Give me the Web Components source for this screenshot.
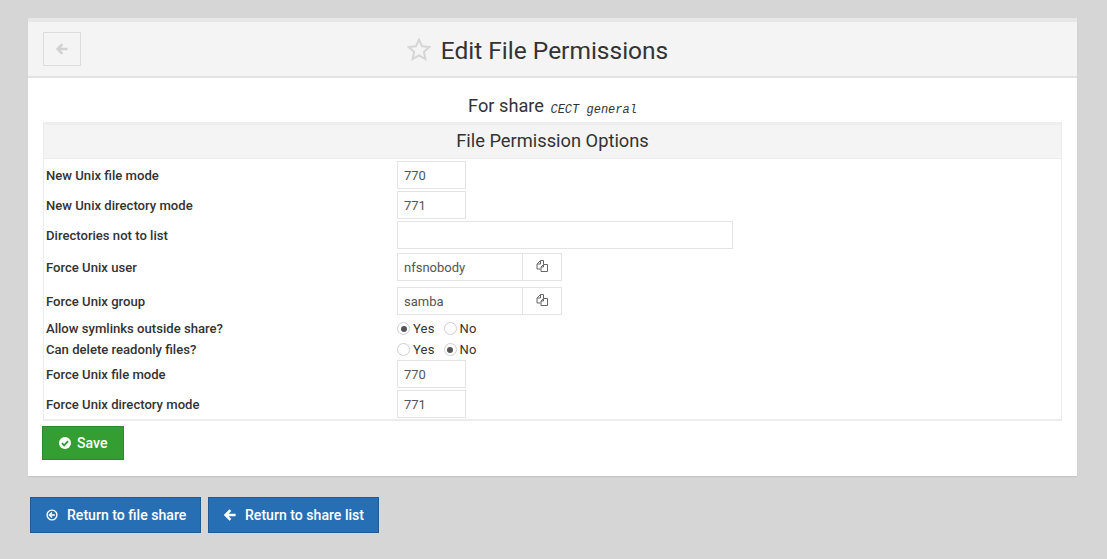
<!DOCTYPE html>
<html>
<head>
<meta charset="utf-8">
<title>Edit File Permissions</title>
<style>
  html, body { margin: 0; height: 100%; }
  body {
    background: #d6d6d6;
    font-family: Roboto, sans-serif;
    color: #333;
    overflow: hidden;
  }
</style>
</head>
<body>
<perm-page>
  <perm-panel heading="Edit File Permissions">
    <perm-subtitle share="CECT general"></perm-subtitle>
    <perm-table heading="File Permission Options">
      <perm-row label="New Unix file mode" pad="1"><perm-input value="770" width="69"></perm-input></perm-row>
      <perm-row label="New Unix directory mode" pad="1"><perm-input value="771" width="69"></perm-input></perm-row>
      <perm-row label="Directories not to list" pad="1"><perm-input value="" width="336"></perm-input></perm-row>
      <perm-row label="Force Unix user" pad="3"><perm-input value="nfsnobody" width="126" addon></perm-input></perm-row>
      <perm-row label="Force Unix group" pad="3"><perm-input value="samba" width="126" addon></perm-input></perm-row>
      <perm-row label="Allow symlinks outside share?"><perm-radios selected="Yes"></perm-radios></perm-row>
      <perm-row label="Can delete readonly files?"><perm-radios selected="No"></perm-radios></perm-row>
      <perm-row label="Force Unix file mode" pad="0 0 1px"><perm-input value="770" width="69"></perm-input></perm-row>
      <perm-row label="Force Unix directory mode" pad="1"><perm-input value="771" width="69"></perm-input></perm-row>
    </perm-table>
    <perm-button tone="green" icon="check" label="Save" class="save"></perm-button>
  </perm-panel>
  <perm-actions>
    <perm-button tone="blue" icon="circle-left" label="Return to file share"></perm-button>
    <perm-button tone="blue" icon="arrow-left" label="Return to share list"></perm-button>
  </perm-actions>
</perm-page>

<script>
const ICONS = {
  'arrow-left': '<svg viewBox="0 0 12 12" width="12" height="12"><path d="M6.4 1.2 L1.6 6 L6.4 10.8 M2.4 6 H11.6" fill="none" stroke="currentColor" stroke-width="2.5"/></svg>',
  'circle-left': '<svg viewBox="0 0 12 12" width="12" height="12"><circle cx="6" cy="6" r="4.9" fill="none" stroke="currentColor" stroke-width="1.4"/><path d="M6 3.4 L3.4 6 L6 8.6 M4 6 H8.9" fill="none" stroke="currentColor" stroke-width="1.4"/></svg>',
  'check': '<svg viewBox="0 0 12 12" width="12" height="12"><circle cx="6" cy="6" r="6" fill="currentColor"/><path d="M2.9 6.1 L5.1 8.3 L9.1 4.1" fill="none" stroke="#359e32" stroke-width="1.9"/></svg>',
  'star': '<svg viewBox="0 0 24 24" width="24" height="24"><path d="M12 2.6 L15 9.2 L22.4 10 L16.9 14.8 L18.4 22 L12 18.4 L5.6 22 L7.1 14.8 L1.6 10 L9 9.2 Z" fill="none" stroke="#d5d5d5" stroke-width="2" stroke-linejoin="miter"/></svg>',
  'copy': '<svg viewBox="0 0 12 12" width="12" height="12"><path d="M4.5 .5 L1 4 V9 H4.5 M4.5 .5 H7.5 V4 M4.5 .5 V4 H1 M7.5 4.5 L5 7 V11.5 H11.5 V4.5 Z M7.5 4.5 V7 H5" fill="none" stroke="#666" stroke-width="1"/></svg>'
};

class PermPage extends HTMLElement {
  connectedCallback() {
    this.attachShadow({ mode: 'open' });
    this.shadowRoot.innerHTML = `
      <style>
        :host { display: block; padding: 18px 30px 0 28px; }
      </style>
      <slot></slot>`;
  }
}

class PermPanel extends HTMLElement {
  connectedCallback() {
    const heading = this.getAttribute('heading');
    this.attachShadow({ mode: 'open' });
    this.shadowRoot.innerHTML = `
      <style>
        :host {
          display: block;
          background: #fff;
          border-top: 4px solid #e7e7e7;
          box-shadow: 0 1px 1px rgba(0,0,0,.08);
        }
        .head {
          display: flex;
          align-items: center;
          justify-content: center;
          position: relative;
          height: 54px;
          background: #f4f4f4;
          border-bottom: 2px solid #e2e2e2;
        }
        .back {
          position: absolute;
          left: 15px;
          top: 10px;
          width: 36px;
          height: 32px;
          border: 1px solid #dcdcdc;
          display: flex;
          align-items: center;
          justify-content: center;
          color: #d2d2d2;
        }
        h1 {
          margin: 2px 30px 0 0;
          font-size: 24.5px;
          font-weight: 400;
          color: #333;
          display: flex;
          align-items: center;
          gap: 10px;
        }
        .star { display: flex; margin-top: -3px; }
        .body { padding: 16px 15px 16px; }
      </style>
      <div class="head">
        <span class="back">${ICONS['arrow-left']}</span>
        <h1><span class="star">${ICONS.star}</span>${heading}</h1>
      </div>
      <div class="body"><slot></slot></div>`;
  }
}

class PermSubtitle extends HTMLElement {
  connectedCallback() {
    this.attachShadow({ mode: 'open' });
    this.shadowRoot.innerHTML = `
      <style>
        :host {
          display: block;
          text-align: center;
          font-size: 18.2px;
          line-height: 26px;
          height: 29px;
          margin-top: -1px;
          color: #333;
        }
        code {
          font-family: "Liberation Mono", monospace;
          font-style: italic;
          font-size: 12px;
          margin-left: 2px;
          vertical-align: -1px;
        }
      </style>
      For share <code>${this.getAttribute('share')}</code>`;
  }
}

class PermTable extends HTMLElement {
  connectedCallback() {
    this.attachShadow({ mode: 'open' });
    this.shadowRoot.innerHTML = `
      <style>
        :host {
          display: block;
          border: 1px solid #ececec;
          border-top: 3px solid #eeeeee;
          border-bottom-width: 2px;
        }
        .title {
          height: 33px;
          line-height: 31px;
          text-align: center;
          font-size: 18.3px;
          font-weight: 400;
          color: #333;
          background: #f4f4f4;
          border-bottom: 1px solid #ececec;
        }
        .rows { padding: 1px 0 0; }
      </style>
      <div class="title">${this.getAttribute('heading')}</div>
      <div class="rows"><slot></slot></div>`;
  }
}

class PermRow extends HTMLElement {
  connectedCallback() {
    const pad = this.getAttribute('pad') || '0';
    this.attachShadow({ mode: 'open' });
    this.shadowRoot.innerHTML = `
      <style>
        :host {
          display: grid;
          grid-template-columns: 353px 1fr;
          align-items: center;
          padding: ${/^\d+$/.test(pad) ? pad + 'px 0' : pad};
          min-height: 21px;
          font-size: 13.1px;
        }
        .label {
          padding-left: 2px;
          font-weight: 500;
          color: #333;
        }
      </style>
      <div class="label">${this.getAttribute('label')}</div>
      <div><slot></slot></div>`;
  }
}

class PermInput extends HTMLElement {
  connectedCallback() {
    const addon = this.hasAttribute('addon');
    this.attachShadow({ mode: 'open' });
    this.shadowRoot.innerHTML = `
      <style>
        :host { display: flex; height: 28px; font-size: 13px; color: #555; }
        .field {
          box-sizing: border-box;
          width: ${this.getAttribute('width')}px;
          height: 28px;
          border: 1px solid #e4e4e4;
          padding: 0 6px;
          line-height: 27px;
          background: #fff;
        }
        .addon {
          box-sizing: border-box;
          width: 39px;
          height: 28px;
          border: 1px solid #e4e4e4;
          border-left: 0;
          display: flex;
          align-items: center;
          justify-content: center;
          padding: 0 1px 2px 0;
        }
      </style>
      <div class="field">${this.getAttribute('value')}</div>
      ${addon ? `<div class="addon">${ICONS.copy}</div>` : ''}`;
  }
}

class PermRadios extends HTMLElement {
  connectedCallback() {
    const selected = this.getAttribute('selected');
    const radio = name => `
      <span class="opt">
        <span class="dot ${name === selected ? 'on' : ''}"></span>${name}
      </span>`;
    this.attachShadow({ mode: 'open' });
    this.shadowRoot.innerHTML = `
      <style>
        :host { display: flex; gap: 9px; font-size: 13px; letter-spacing: .2px; color: #333; }
        .opt { display: flex; align-items: center; gap: 3px; }
        .dot {
          box-sizing: border-box;
          width: 13px;
          height: 13px;
          border-radius: 50%;
          border: 1px solid #cfcfcf;
          background: #fff;
          display: inline-block;
          position: relative;
        }
        .dot.on::after {
          content: "";
          position: absolute;
          left: 2.5px;
          top: 2.5px;
          width: 6px;
          height: 6px;
          border-radius: 50%;
          background: #555;
        }
      </style>
      ${radio('Yes')}${radio('No')}`;
  }
}

class PermButton extends HTMLElement {
  connectedCallback() {
    const blue = this.getAttribute('tone') === 'blue';
    const isSave = this.classList.contains('save');
    this.attachShadow({ mode: 'open' });
    this.shadowRoot.innerHTML = `
      <style>
        :host {
          display: ${isSave ? 'flex' : 'inline-flex'};
          margin-left: ${isSave ? '-1px' : '0'};
          margin-top: ${isSave ? '5px' : '0'};
        }
        .btn {
          box-sizing: border-box;
          display: inline-flex;
          align-items: center;
          color: #fff;
          font-weight: 500;
          font-size: 14.1px;
          gap: ${blue ? 9 : 6}px;
          width: ${blue ? 171 : 82}px;
          height: ${blue ? 36 : 34}px;
          padding-left: ${blue ? 15 : 16}px;
          background: ${blue ? '#276fb4' : '#359e32'};
          border: 1px solid ${blue ? '#205a91' : '#2d8a2b'};
        }
        svg { display: block; }
      </style>
      <span class="btn">${ICONS[this.getAttribute('icon')]}<span>${this.getAttribute('label')}</span></span>`;
  }
}

class PermActions extends HTMLElement {
  connectedCallback() {
    this.attachShadow({ mode: 'open' });
    this.shadowRoot.innerHTML = `
      <style>
        :host { display: flex; gap: 7px; padding: 21px 0 0 2px; }
      </style>
      <slot></slot>`;
  }
}

customElements.define('perm-page', PermPage);
customElements.define('perm-panel', PermPanel);
customElements.define('perm-subtitle', PermSubtitle);
customElements.define('perm-table', PermTable);
customElements.define('perm-row', PermRow);
customElements.define('perm-input', PermInput);
customElements.define('perm-radios', PermRadios);
customElements.define('perm-button', PermButton);
customElements.define('perm-actions', PermActions);
</script>
</body>
</html>
